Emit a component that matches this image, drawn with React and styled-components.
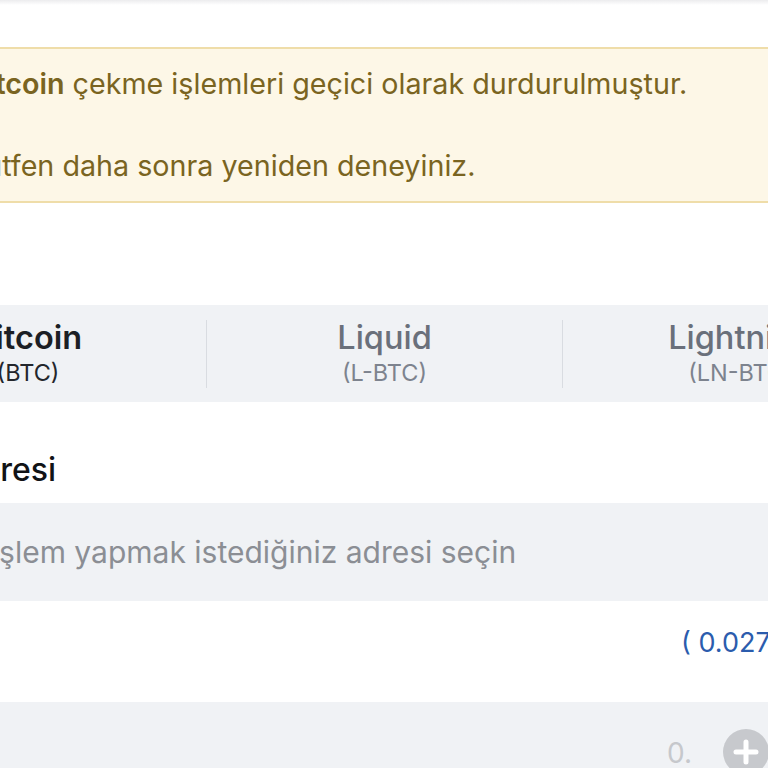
import React from "react";
import styled, { createGlobalStyle } from "styled-components";

const GlobalStyle = createGlobalStyle`
  html, body {
    margin: 0;
    padding: 0;
    background: #ffffff;
    overflow: hidden;
  }
  body {
    font-family: Inter, "Noto Sans", "Liberation Sans", sans-serif;
    -webkit-font-smoothing: antialiased;
  }
`;

// the view is a zoomed crop, so the column starts left of the window
const Page = styled.div`
  width: 1068px;
  margin-left: -150px;
  display: flex;
  flex-direction: column;
`;

const Shade = styled.div`
  height: 5px;
  background: linear-gradient(#ececee, #ffffff);
`;

const Alert = styled.div`
  margin-top: 42px;
  background: #fdf7e7;
  border-top: 2px solid #efdda9;
  border-bottom: 2px solid #efdda9;
  padding: 16px 0 16px 119px;
  display: flex;
  flex-direction: column;
  gap: 44px;
  color: #7a6421;
  font-size: 28.7px;
  line-height: 38px;
  p {
    margin: 0;
    white-space: nowrap;
  }
  b {
    font-weight: 600;
  }
`;

const Tabs = styled.div`
  margin-top: 102px;
  background: #f0f2f5;
  padding: 15px 0 14px;
  display: grid;
  grid-template-columns: repeat(3, 1fr);
`;

const Tab = styled.div`
  display: flex;
  flex-direction: column;
  align-items: center;
  justify-content: center;
  height: 68px;
  border-left: ${(p) => (p.$first ? "none" : "1px solid #d9dce1")};
`;

const TabTitle = styled.div`
  font-size: 32.5px;
  line-height: 34px;
  font-weight: ${(p) => (p.$active ? 600 : 500)};
  color: ${(p) => (p.$active ? "#1c1f25" : "#6a707b")};
`;

const TabSub = styled.div`
  margin-top: 3px;
  font-size: 23.5px;
  line-height: 30px;
  color: ${(p) => (p.$active ? "#23262c" : "#7d838e")};
`;

const Label = styled.div`
  margin-top: 48px;
  margin-bottom: 13px;
  padding-left: 108px;
  font-size: 32px;
  line-height: 40px;
  font-weight: 500;
  color: #111316;
  white-space: nowrap;
`;

const Field = styled.div`
  height: 98px;
  background: #f0f2f5;
  display: flex;
  align-items: center;
  justify-content: ${(p) => (p.$end ? "flex-end" : "flex-start")};
  padding: ${(p) => (p.$end ? "0 149px 0 0" : "0 0 0 141px")};
`;

const Placeholder = styled.span`
  font-size: 30px;
  color: #8b8e94;
  white-space: nowrap;
`;

const BalanceRow = styled.div`
  margin-top: 22px;
  margin-bottom: 39px;
  line-height: 40px;
  display: flex;
  padding-left: 831px;
`;

const Balance = styled.span`
  font-size: 27px;
  color: #2b5cad;
  white-space: nowrap;
`;

const Zero = styled.span`
  font-size: 28px;
  color: #c6c8cc;
  margin-right: 31px;
  margin-top: 4px;
`;

const PlusButton = styled.div`
  width: 46px;
  height: 46px;
  border-radius: 50%;
  background: #c7c9cd;
  display: flex;
  align-items: center;
  justify-content: center;
  margin-top: 2px;
`;

const tabs = [
  { title: "Bitcoin", sub: "(BTC)", active: true },
  { title: "Liquid", sub: "(L-BTC)" },
  { title: "Lightning", sub: "(LN-BTC)" },
];

export default function App() {
  return (
    <>
      <GlobalStyle />
      <Page>
        <Shade />
        <Alert>
          <p>
            <b>Bitcoin</b> çekme işlemleri geçici olarak durdurulmuştur.
          </p>
          <p>Lütfen daha sonra yeniden deneyiniz.</p>
        </Alert>
        <Tabs>
          {tabs.map((t, i) => (
            <Tab key={t.title} $first={i === 0}>
              <TabTitle $active={t.active}>{t.title}</TabTitle>
              <TabSub $active={t.active}>{t.sub}</TabSub>
            </Tab>
          ))}
        </Tabs>
        <Label>Adresi</Label>
        <Field>
          <Placeholder>İşlem yapmak istediğiniz adresi seçin</Placeholder>
        </Field>
        <BalanceRow>
          <Balance>( 0.02745 BTC )</Balance>
        </BalanceRow>
        <Field $end>
          <Zero>0.</Zero>
          <PlusButton>
            <svg width="26" height="26" viewBox="0 0 26 26">
              <path d="M13 3v20M3 13h20" stroke="#fff" strokeWidth="5" strokeLinecap="round" />
            </svg>
          </PlusButton>
        </Field>
      </Page>
    </>
  );
}
